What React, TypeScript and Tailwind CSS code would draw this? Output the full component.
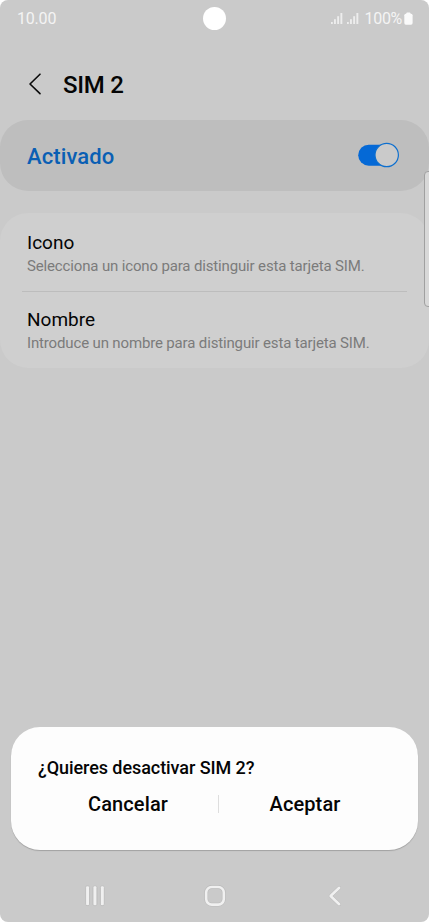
import React from 'react';

function SignalIcon() {
  return (
    <svg width="12" height="13" viewBox="0 0 12 13" fill="#ededed">
      <rect x="0" y="10" width="1.8" height="2" />
      <rect x="3" y="7.2" width="1.9" height="4.8" />
      <rect x="6.2" y="4.2" width="1.9" height="7.8" />
      <rect x="9.4" y="1" width="1.9" height="11" />
    </svg>
  );
}

function StatusBar() {
  return (
    <div className="relative flex h-9 shrink-0 items-center justify-between pl-[17px] pr-[16px] pt-px text-[16px] text-[#f4f4f4]">
      <span className="tracking-[-0.2px] leading-9">10.00</span>
      <div className="absolute left-[202.5px] top-[6.5px] h-[23.5px] w-[23.5px] rounded-full bg-white" />
      <div className="flex items-center">
        <SignalIcon />
        <span className="w-1" />
        <SignalIcon />
        <span className="ml-[6px] mr-[2px] tracking-[-0.3px] leading-9">100%</span>
        <svg width="9" height="13" viewBox="0 0 9 13" fill="#fafafa">
          <rect x="2.4" y="0.4" width="4" height="3" rx="0.8" />
          <rect x="0.3" y="1.7" width="8.3" height="11" rx="1.6" />
        </svg>
      </div>
    </div>
  );
}

type SettingProps = {
  title: string;
  description: string;
};

function Setting({ title, description }: SettingProps) {
  return (
    <div className="px-[27px]">
      <div className="text-[19px] leading-6 text-[#050505]">{title}</div>
      <div className="whitespace-nowrap text-[15px] tracking-[-0.15px] leading-[22px] text-[#7b7b7b]">{description}</div>
    </div>
  );
}

function NavBar() {
  return (
    <div className="flex h-[52px] shrink-0 items-center justify-between px-[84px]">
      <svg width="22" height="24" viewBox="0 0 22 24" fill="#f0f0f0" stroke="#b9b9b9" strokeWidth="0.8">
        <rect x="1.6" y="1.8" width="3.9" height="19.8" rx="1.4" />
        <rect x="9" y="1.8" width="3.9" height="19.8" rx="1.4" />
        <rect x="16.4" y="1.8" width="3.9" height="19.8" rx="1.4" />
      </svg>
      <svg width="24" height="24" viewBox="0 0 24 24" fill="none">
        <rect x="3.2" y="3" width="17.6" height="17.6" rx="5.5" stroke="#b9b9b9" strokeWidth="3.8" />
        <rect x="3.2" y="3" width="17.6" height="17.6" rx="5.5" stroke="#f0f0f0" strokeWidth="2.6" />
      </svg>
      <svg width="22" height="24" viewBox="0 0 22 24" fill="none" strokeLinecap="round" strokeLinejoin="round">
        <path d="M16.2 3.8 7.6 12l8.6 8.2" stroke="#b9b9b9" strokeWidth="3.6" />
        <path d="M16.2 3.8 7.6 12l8.6 8.2" stroke="#f0f0f0" strokeWidth="2.6" />
      </svg>
    </div>
  );
}

function App() {
  return (
    <div className="h-[922px] w-[429px] bg-white font-['Roboto',sans-serif]">
      <main className="relative flex h-full flex-col overflow-hidden rounded-[8px] bg-[#cacaca]">
        <StatusBar />

        <header className="mt-3 flex h-[71.5px] shrink-0 items-center pl-[28px]">
          <svg width="14" height="22" viewBox="0 0 14 22" fill="none" stroke="#0a0a0a" strokeWidth="1.6" strokeLinecap="round" strokeLinejoin="round">
            <path d="M12 1.2 2 11l10 9.6" />
          </svg>
          <h1 className="ml-[21px] pt-[2px] text-[24px] font-medium tracking-[-0.25px] leading-8 text-[#050505]">SIM 2</h1>
        </header>

        <section className="flex h-[71px] shrink-0 items-center justify-between rounded-[28px] bg-[#bebebe] pl-[27px] pr-[29px]">
          <span className="pt-[4px] text-[22px] font-medium tracking-[0.1px] leading-8 text-[#0a5fb4]">Activado</span>
          <svg width="42" height="26" viewBox="0 0 42 26">
            <rect x="0.2" y="2.7" width="36" height="21" rx="10.5" fill="#0569d6" />
            <circle cx="28.7" cy="13" r="11.7" fill="#cacaca" stroke="#0d6fcf" strokeWidth="1.2" />
          </svg>
        </section>

        <section className="mt-[22.5px] h-[155px] shrink-0 rounded-[28px] bg-[#cfcfcf] pt-[18px]">
          <Setting title="Icono" description="Selecciona un icono para distinguir esta tarjeta SIM." />
          <div className="mx-[22px] mb-4 mt-[14px] h-px bg-[#bdbdbd]" />
          <Setting title="Nombre" description="Introduce un nombre para distinguir esta tarjeta SIM." />
        </section>

        {/* edge panel handle */}
        <div className="absolute -right-1 top-[171px] h-[136px] w-[9px] rounded-[4px] border border-[#a0a0a0] bg-[#d8d8d8]" />

        <section className="mx-[11px] mb-[20px] mt-auto h-[123px] shrink-0 rounded-[29px] bg-[#fdfdfd] pt-[29px] shadow-[0_1px_1px_rgba(0,0,0,0.2)]">
          <p className="pl-[27px] text-[18px] font-medium tracking-[-0.07px] leading-6 text-[#050505]">¿Quieres desactivar SIM 2?</p>
          <div className="mt-[10px] flex items-center text-[20px] font-medium leading-7 text-[#050505]">
            <button className="w-[207px] pl-[27px] tracking-[0.1px]">Cancelar</button>
            <span className="h-[18px] w-px bg-[#dedede]" />
            <button className="flex-1 pr-[27px] tracking-[0.1px]">Aceptar</button>
          </div>
        </section>

        <NavBar />
      </main>
    </div>
  );
}

export default App;
